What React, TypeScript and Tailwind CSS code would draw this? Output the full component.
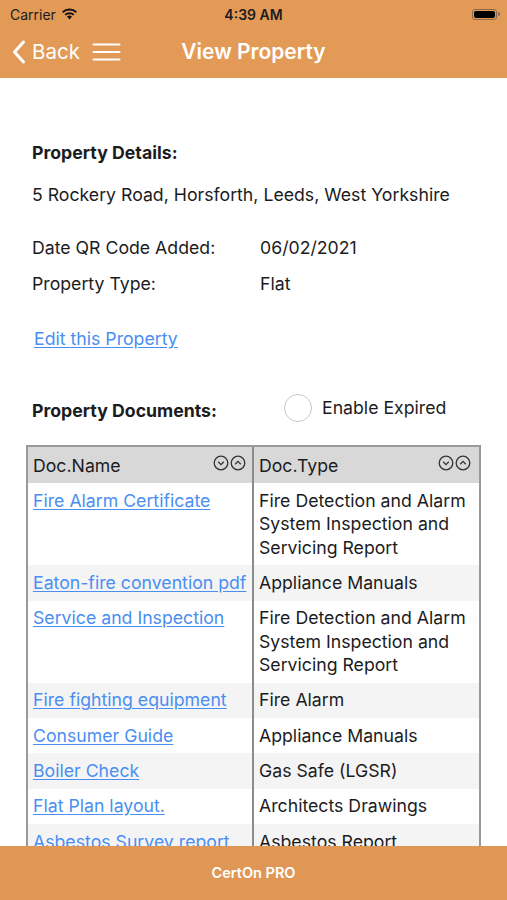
import React from "react";

const rows: { name: string; type: string[] }[] = [
  { name: "Fire Alarm Certificate", type: ["Fire Detection and Alarm", "System Inspection and", "Servicing Report"] },
  { name: "Eaton-fire convention pdf", type: ["Appliance Manuals"] },
  { name: "Service and Inspection", type: ["Fire Detection and Alarm", "System Inspection and", "Servicing Report"] },
  { name: "Fire fighting equipment", type: ["Fire Alarm"] },
  { name: "Consumer Guide", type: ["Appliance Manuals"] },
  { name: "Boiler Check", type: ["Gas Safe (LGSR)"] },
  { name: "Flat Plan layout.", type: ["Architects Drawings"] },
  { name: "Asbestos Survey report", type: ["Asbestos Report"] },
];

function SortIcons() {
  return (
    <div className="flex items-center gap-[1px] mt-[-4px]">
      <svg width="16" height="16" viewBox="0 0 16 16" fill="none" stroke="#333" strokeWidth="1.3">
        <circle cx="8" cy="8" r="6.8" />
        <path d="M5.2 6.8 L8 9.6 L10.8 6.8" />
      </svg>
      <svg width="16" height="16" viewBox="0 0 16 16" fill="none" stroke="#333" strokeWidth="1.3">
        <circle cx="8" cy="8" r="6.8" />
        <path d="M5.2 9.2 L8 6.4 L10.8 9.2" />
      </svg>
    </div>
  );
}

export default function App() {
  return (
    <div
      className="w-[507px] h-[900px] bg-white flex flex-col overflow-hidden text-[#1c1c1e]"
      style={{ fontFamily: "Inter, 'Liberation Sans', sans-serif" }}
    >
      {/* Header */}
      <div className="bg-[#e39a57] h-[78px] shrink-0 flex flex-col">
        <div className="h-[28px] flex items-center justify-between px-[10px] relative">
          <div className="flex items-center gap-[5px] text-[14px] text-[#1c1c1e]">
            <span>Carrier</span>
            <svg width="17" height="12" viewBox="0 0 17 12">
              <path d="M8.5 11.5 L6 8.6 A3.6 3.6 0 0 1 11 8.6 Z" fill="#111" />
              <path d="M3.6 6.2 A7 7 0 0 1 13.4 6.2 L12.1 7.6 A5.2 5.2 0 0 0 4.9 7.6 Z" fill="#111" />
              <path d="M1 3.6 A10.8 10.8 0 0 1 16 3.6 L14.7 5 A9 9 0 0 0 2.3 5 Z" fill="#111" />
            </svg>
          </div>
          <div className="absolute left-0 right-0 text-center text-[14px] font-semibold pointer-events-none">4:39 AM</div>
          <div className="flex items-center mr-[-3px]">
            <div className="w-[25px] h-[11px] rounded-[3px] border border-[#8a6a4a] p-[1px]">
              <div className="w-full h-full bg-black rounded-[2px]" />
            </div>
            <div className="w-[2px] h-[4px] bg-[#8a6a4a] rounded-r-sm ml-[1px]" />
          </div>
        </div>
        <div className="flex-1 flex items-center relative pb-[2px]">
          <div className="flex items-center pl-[12px]">
            <svg width="14" height="24" viewBox="0 0 14 24" fill="none" stroke="white" strokeWidth="3" strokeLinecap="round" strokeLinejoin="round">
              <path d="M11.5 2 L2.5 12 L11.5 22" />
            </svg>
            <span className="text-white text-[20.5px] ml-[6px]">Back</span>
            <svg className="ml-[12px]" width="29" height="20" viewBox="0 0 29 20" stroke="white" strokeWidth="2.2" strokeLinecap="round">
              <path d="M1.5 2.5 H27.5 M1.5 10 H27.5 M1.5 17.5 H27.5" />
            </svg>
          </div>
          <div className="absolute left-0 right-0 text-center text-white text-[21px] font-semibold pointer-events-none">
            View Property
          </div>
        </div>
      </div>

      {/* Content */}
      <div className="flex-1 overflow-hidden">
        <div className="px-[32px] pt-[63px] text-[17.7px]">
          <div className="font-bold leading-[24px]">Property Details:</div>
          <div className="mt-[18px] leading-[24px]">5 Rockery Road, Horsforth, Leeds, West Yorkshire</div>
          <div className="mt-[29px] flex leading-[24px]">
            <span className="w-[228px]">Date QR Code Added:</span>
            <span>06/02/2021</span>
          </div>
          <div className="mt-[12px] flex leading-[24px]">
            <span className="w-[228px]">Property Type:</span>
            <span>Flat</span>
          </div>
          <div className="mt-[31px] leading-[24px] pl-[2px]">
            <span className="text-[#4a8ef2] underline underline-offset-2">Edit this Property</span>
          </div>
          <div className="mt-[43px] flex items-start leading-[24px]">
            <span className="font-bold w-[252px] mt-[5px]">Property Documents:</span>
            <div className="w-[28px] h-[28px] rounded-full border border-[#c8c8c8]" />
            <span className="ml-[10px] mt-[2px]">Enable Expired</span>
          </div>
        </div>

        <div className="mx-[26px] mt-[22px] border-2 border-b-0 border-[#9a9a9a] text-[17.7px]">
          <div className="grid grid-cols-[226px_1fr] bg-[#d8d8d8] h-[36px]">
            <div className="border-r-2 border-[#8c8c8c] flex items-center justify-between pl-[5px] pr-[6px]">
              <span className="mt-[2px]">Doc.Name</span>
              <SortIcons />
            </div>
            <div className="flex items-center justify-between pl-[5px] pr-[8px]">
              <span className="mt-[2px]">Doc.Type</span>
              <SortIcons />
            </div>
          </div>
          {rows.map((r, i) => (
            <div key={i} className={`grid grid-cols-[226px_1fr] ${i % 2 === 0 ? "bg-white" : "bg-[#f4f4f4]"}`}>
              <div className="border-r-2 border-[#8c8c8c] pl-[5px] pt-[5.5px] pb-[6.3px] leading-[23.5px]">
                <span className="text-[#4a8ef2] underline underline-offset-2 whitespace-nowrap">{r.name}</span>
              </div>
              <div className="pl-[5px] pt-[5.5px] pb-[6.3px] leading-[23.5px]">
                {r.type.map((t, j) => (
                  <div key={j} className="whitespace-nowrap">{t}</div>
                ))}
              </div>
            </div>
          ))}
        </div>
      </div>

      {/* Footer */}
      <div className="bg-[#e09755] h-[54px] shrink-0 flex items-center justify-center">
        <span className="text-white text-[14.5px] font-semibold">CertOn PRO</span>
      </div>
    </div>
  );
}
